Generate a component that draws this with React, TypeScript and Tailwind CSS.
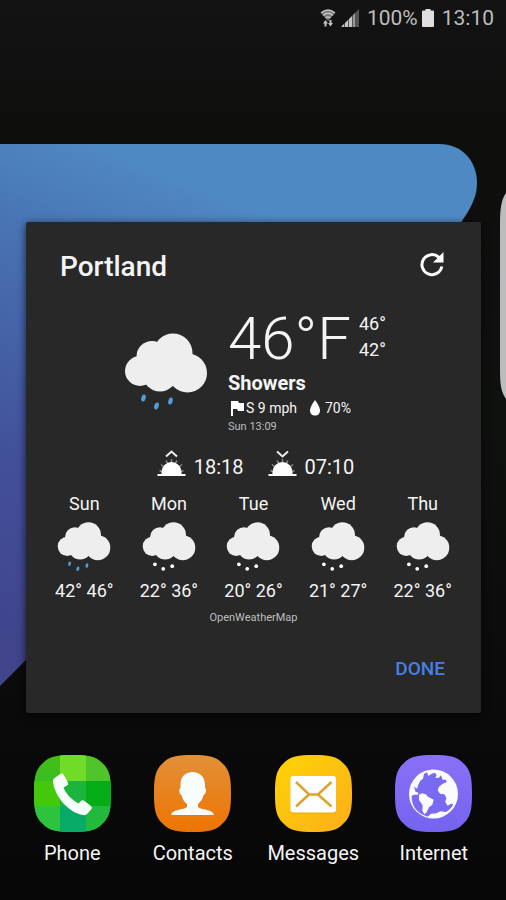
import type { ReactNode } from "react";

type DayForecast = {
  day: string;
  low: string;
  high: string;
  kind: "rain" | "snow";
};

const forecast: DayForecast[] = [
  { day: "Sun", low: "42°", high: "46°", kind: "rain" },
  { day: "Mon", low: "22°", high: "36°", kind: "snow" },
  { day: "Tue", low: "20°", high: "26°", kind: "snow" },
  { day: "Wed", low: "21°", high: "27°", kind: "snow" },
  { day: "Thu", low: "22°", high: "36°", kind: "snow" },
];

const TILE =
  "M38.500 0C53 0 62 1 68.500 8.500C76 15 77 24 77 38.500C77 53 76 62 68.500 68.500C62 76 53 77 38.500 77C24 77 15 76 8.500 68.500C1 62 0 53 0 38.500C0 24 1 15 8.500 8.500C15 1 24 0 38.500 0Z";

function Wallpaper() {
  return (
    <svg
      aria-hidden="true"
      viewBox="0 0 506 900"
      preserveAspectRatio="xMinYMin slice"
      className="absolute inset-0 -z-10 h-full w-full"
    >
      <defs>
        <linearGradient id="sweep" gradientUnits="userSpaceOnUse" x1="0" y1="640" x2="190" y2="180">
          <stop offset="0" stopColor="#40458c" />
          <stop offset="0.35" stopColor="#42509a" />
          <stop offset="0.75" stopColor="#4871b2" />
          <stop offset="1" stopColor="#4f89c4" />
        </linearGradient>
        <linearGradient id="night" x1="0" y1="0" x2="0" y2="1">
          <stop offset="0" stopColor="#131313" />
          <stop offset="0.15" stopColor="#0e0e0d" />
          <stop offset="0.45" stopColor="#0f110f" />
          <stop offset="1" stopColor="#060606" />
        </linearGradient>
      </defs>
      <rect width="506" height="900" fill="url(#night)" />
      <path d="M0 144H439C462 144 477 161 477 183C477 198 470 209 460 224L0 686Z" fill="url(#sweep)" />
      <path d="M506 193C501 200 500 210 500 224V370C500 384 501 392 506 399Z" fill="#bcbcbe" />
    </svg>
  );
}

function WifiIcon() {
  return (
    <svg viewBox="0 0 18 20" className="h-5 w-[18px]" aria-hidden="true">
      <path d="M2 5Q9 -1 16 5L9 13Z" fill="#777" />
      <path d="M2 5Q9 -1 16 5M4 7.500Q9 3 14 7.500M6.500 10Q9 8 11.500 10" fill="none" stroke="#c2c2c2" strokeWidth="1.500" />
      <path d="M6.500 12L9 15.500H7.500V18.500H5.500V15.500H4ZM11.500 18.500L9 15H10.500V12H12.500V15H14Z" fill="#c2c2c2" />
    </svg>
  );
}

function SignalIcon() {
  return (
    <svg viewBox="0 0 18 18" className="h-[18px] w-[18px]" aria-hidden="true">
      <path d="M0 18L18 0V18Z" fill="#545454" />
      <path d="M0 18L3 15V18ZM4 14L7 11V18H4ZM8 10L11 7V18H8Z" fill="#c4c4c4" />
      <path d="M12 6L14 4V18H12Z" fill="#999" />
    </svg>
  );
}

function BatteryIcon() {
  return (
    <svg viewBox="0 0 12 18" className="h-[18px] w-3" aria-hidden="true">
      <path d="M3.500 0H8.500V1.500H11Q12 1.500 12 2.500V17Q12 18 11 18H1Q0 18 0 17V2.500Q0 1.500 1 1.500H3.500Z" fill="#dedede" />
    </svg>
  );
}

function RefreshIcon() {
  return (
    <svg viewBox="0 0 26 26" className="size-[26px]" aria-hidden="true">
      <path d="M20 6.500A10 10 0 1 0 22.800 15.500" fill="none" stroke="#fff" strokeWidth="3" />
      <path d="M24.500 1V11.500H14Z" fill="#fff" />
    </svg>
  );
}

function CloudIcon({ kind, className }: { kind: "rain" | "snow"; className: string }) {
  return (
    <svg viewBox="0 0 84 78" className={className} aria-hidden="true">
      <g fill="#eee">
        <circle cx="16" cy="38" r="15" />
        <circle cx="28" cy="23.500" r="15.500" />
        <circle cx="49" cy="20" r="19.500" />
        <circle cx="63.500" cy="40" r="19.500" />
        <circle cx="36" cy="41" r="17.500" />
      </g>
      {kind === "rain" ? (
        <g fill="#4c9fdb">
          <ellipse cx="19.500" cy="65" rx="2.200" ry="3.600" transform="rotate(14 19.500 65)" />
          <ellipse cx="32.500" cy="73" rx="2.200" ry="3.600" transform="rotate(18 32.500 73)" />
          <ellipse cx="46.500" cy="68" rx="2.200" ry="3.600" transform="rotate(14 46.500 68)" />
        </g>
      ) : (
        <g fill="#fff">
          <circle cx="20" cy="66" r="2.900" />
          <circle cx="33" cy="73" r="2.900" />
          <circle cx="47" cy="69" r="2.900" />
        </g>
      )}
    </svg>
  );
}

function FlagIcon() {
  return (
    <svg viewBox="0 0 14 15" className="h-[15px] w-3.5" aria-hidden="true">
      <path d="M1 0H8L9 2H14V10H8L7 8H3V15H1Z" fill="#fff" />
    </svg>
  );
}

function DropIcon() {
  return (
    <svg viewBox="0 0 12 16" className="h-4 w-3" aria-hidden="true">
      <path d="M6 0C9 4 11 7.500 11 10.500C11 13.500 9 15.500 6 15.500C3 15.500 1 13.500 1 10.500C1 7.500 3 4 6 0Z" fill="#fff" />
    </svg>
  );
}

function SunIcon({ up }: { up: boolean }) {
  return (
    <svg viewBox="0 0 29 28" className="-mt-1.5 h-7 w-[29px]" aria-hidden="true">
      <path d={up ? "M9 6.500L14.500 1.500L20 6.500" : "M9 1.500L14.500 6.500L20 1.500"} fill="none" stroke="#eee" strokeWidth="2" />
      <path d="M2.500 20.500L6 22M4 14.500L7 17M9 10.500L10.500 13M14.500 9V12M20 10.500L18.500 13M25 14.500L22 17M26.500 20.500L23 22" stroke="#888" strokeWidth="1.500" />
      <path d="M4.500 24V22A10 10 0 0 1 24.500 22V24Z" fill="#fff" />
      <path d="M0.500 24H28.500V26H0.500Z" fill="#fff" />
    </svg>
  );
}

function PhoneTile() {
  return (
    <svg viewBox="0 0 77 77" className="size-[77px]" aria-hidden="true">
      <defs>
        <clipPath id="phoneTile">
          <path d={TILE} />
        </clipPath>
        <linearGradient id="leaf" x1="0" y1="0" x2="0" y2="1">
          <stop offset="0" stopColor="#45be12" />
          <stop offset="1" stopColor="#1fba46" />
        </linearGradient>
      </defs>
      <g clipPath="url(#phoneTile)">
        <rect width="77" height="77" fill="url(#leaf)" />
        <rect x="26" width="26" height="26" fill="#70dc28" />
        <rect x="52" width="25" height="26" fill="#4fc52b" />
        <rect y="26" width="26" height="25" fill="#43c90c" />
        <rect x="26" y="26" width="26" height="25" fill="#1bb53e" />
        <rect x="52" y="26" width="25" height="25" fill="#04ac16" />
        <rect y="51" width="26" height="26" fill="#2dc33c" />
        <rect x="26" y="51" width="26" height="26" fill="#07aa67" />
        <rect x="52" y="51" width="25" height="26" fill="#22b93c" />
      </g>
      <path
        d="M27 18.500Q28.500 18 29.500 19.500L34 27.500Q35 29.500 33 30.500L29.500 32.500C32 39 38 45 44.500 48.500L47 46Q48.500 44.500 50.500 46L57 51Q58.500 52.500 57.500 54L53 59Q51.500 60.500 49 60C35 58 20 41 19 26Q19 24 20.500 23Z"
        fill="#f8fefb"
      />
    </svg>
  );
}

function ContactsTile() {
  return (
    <svg viewBox="0 0 77 77" className="size-[77px]" aria-hidden="true">
      <defs>
        <linearGradient id="amber" x1="0" y1="0" x2="0" y2="1">
          <stop offset="0" stopColor="#e29038" />
          <stop offset="1" stopColor="#ee7402" />
        </linearGradient>
      </defs>
      <path d={TILE} fill="url(#amber)" />
      <path
        d="M38 17C46 17 51 22 51 30V33C53 34 52 39 49.500 40C48.500 45 46 47 44 49V52C47 55 59 54 60 60H17C18 54 30 55 33 52V49C30 47 28.500 44 27.500 40C25 39 24.500 34 26.500 33V30C26.500 22 30 18 38 17Z"
        fill="#fafdff"
      />
    </svg>
  );
}

function MessagesTile() {
  return (
    <svg viewBox="0 0 77 77" className="size-[77px]" aria-hidden="true">
      <defs>
        <linearGradient id="honey" x1="0" y1="0" x2="1" y2="1">
          <stop offset="0" stopColor="#fdd405" />
          <stop offset="1" stopColor="#fcae1b" />
        </linearGradient>
      </defs>
      <path d={TILE} fill="url(#honey)" />
      <rect x="16" y="22" width="45" height="37" rx="3" fill="#e39d10" opacity="0.500" />
      <rect x="15.500" y="21" width="45.500" height="36.500" rx="3" fill="#fff" />
      <path d="M21 27L34 39.500H43L56.500 27M21 51.500L34 39.500M43 39.500L56.500 51.500" fill="none" stroke="#dda32d" strokeWidth="2.500" />
    </svg>
  );
}

function InternetTile() {
  return (
    <svg viewBox="0 0 77 77" className="size-[77px]" aria-hidden="true">
      <defs>
        <linearGradient id="violet" x1="0" y1="0" x2="0" y2="1">
          <stop offset="0" stopColor="#8b70f7" />
          <stop offset="1" stopColor="#7464ef" />
        </linearGradient>
      </defs>
      <path d={TILE} fill="url(#violet)" />
      <circle cx="38.500" cy="39" r="24.500" fill="#fafaff" />
      <g transform="translate(8 9) scale(0.3333)">
        <path
          d="M33 68L42 74L46 62L52 50L60 44L63 30L72 25L76 36L86 29L96 26L101 34L97 42L108 41L114 34L119 47L129 47L131 54L118 60L108 68L104 79L111 89L124 91L130 101L127 114L134 125L144 119L151 121Q144 136 128 144L112 142L100 148L84 149L74 158Q52 152 38 136Q26 120 26 96L33 92L44 92L47 86L38 84Z"
          fill="#7a69f1"
        />
        <path d="M48 92L58 88L68 91L75 98L92 107L88 122L78 130L71 145L64 151L58 140L59 124L48 108Z" fill="#fafaff" />
      </g>
    </svg>
  );
}

const apps: { name: string; icon: ReactNode }[] = [
  { name: "Phone", icon: <PhoneTile /> },
  { name: "Contacts", icon: <ContactsTile /> },
  { name: "Messages", icon: <MessagesTile /> },
  { name: "Internet", icon: <InternetTile /> },
];

export default function App() {
  return (
    <div className="relative isolate flex min-h-screen flex-col overflow-hidden bg-[#0b0b0b] font-['Roboto',sans-serif] text-[#f4f4f4]">
      <Wallpaper />

      <header className="flex h-9 items-center justify-end pr-3 text-[21px] leading-6 text-[#bdbdbd]">
        <WifiIcon />
        <span className="ml-1 mr-2">
          <SignalIcon />
        </span>
        <span>100%</span>
        <span className="ml-1 mr-2">
          <BatteryIcon />
        </span>
        <time>13:10</time>
      </header>

      <main className="ml-[26px] mr-[25px] mt-[186px] rounded-xs bg-[#282828] pb-6 shadow-[0_2px_8px_rgba(0,0,0,0.7)]">
        <div className="flex items-start justify-between pl-[34px] pr-9 pt-[29px]">
          <h1 className="text-[28px] font-medium leading-8">Portland</h1>
          <button type="button" aria-label="Refresh">
            <RefreshIcon />
          </button>
        </div>

        <section className="mt-6 flex pl-[98px]">
          <CloudIcon kind="rain" className="mt-[26px] h-[78px] w-[84px] shrink-0" />
          <div className="ml-5">
            <div className="flex gap-2">
              <p className="text-[60px] font-light leading-[64px]">46°F</p>
              <div className="pt-1 text-[18px] leading-[26px]">
                <p>46°</p>
                <p>42°</p>
              </div>
            </div>
            <p className="text-[20px] font-bold leading-6">Showers</p>
            <div className="flex items-center pl-0.5 text-[14px] leading-[26px]">
              <FlagIcon />
              <span className="ml-0.5">S 9 mph</span>
              <span className="ml-3 mr-1">
                <DropIcon />
              </span>
              <span>70%</span>
            </div>
            <p className="text-[11px] leading-3 text-[#bdbdbd]">Sun 13:09</p>
          </div>
        </section>

        <section className="mt-5 flex items-center justify-center gap-6 pl-1 text-[20px] leading-7">
          <p className="flex items-center gap-2">
            <SunIcon up />
            18:18
          </p>
          <p className="flex items-center gap-2">
            <SunIcon up={false} />
            07:10
          </p>
        </section>

        <section className="mt-[11px] grid grid-cols-5 px-4 text-center text-[18px] leading-6">
          {forecast.map((item) => (
            <div key={item.day} className="flex flex-col items-center">
              <h2>{item.day}</h2>
              <CloudIcon kind={item.kind} className="mt-1.5 h-[50px] w-[54px]" />
              <p className="mt-[7px]">
                {item.low} {item.high}
              </p>
            </div>
          ))}
        </section>

        <p className="mt-[7px] text-center text-[11px] leading-4 text-[#bdbdbd]">OpenWeatherMap</p>

        <div className="mt-[23px] flex justify-end pr-9">
          <button type="button" className="text-[19px] font-medium leading-10 text-[#477fe4]">
            DONE
          </button>
        </div>
      </main>

      <nav className="mt-auto grid grid-cols-4 px-3 pb-[34px]">
        {apps.map((app) => (
          <a key={app.name} href="#" className="flex flex-col items-center gap-2 text-[20px] leading-[26px]">
            {app.icon}
            {app.name}
          </a>
        ))}
      </nav>
    </div>
  );
}
